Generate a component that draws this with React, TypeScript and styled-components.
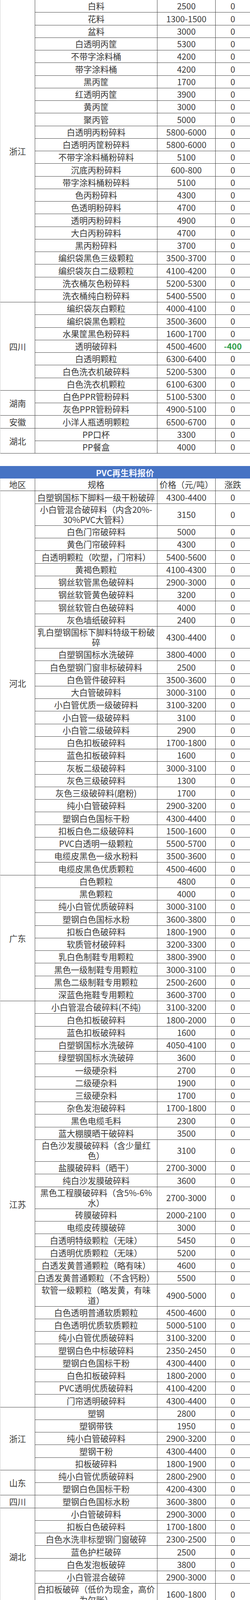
import { createGlobalStyle, styled } from 'styled-components';

const GlobalStyle = createGlobalStyle`
  body {
    margin: 0;
    background: #fff;
  }
  * {
    box-sizing: border-box;
  }
`;

// one table row is 32.25px high, every extra line of text adds 24px
const ROW = 32.25;
const EXTRA_LINE = 24;

type Item = [string, string, string?];
type Group = { region: string; items: Item[] };

const ppGroups: Group[] = [
  {
    region: '浙江',
    items: [
      ['白料', '2500'],
      ['花料', '1300-1500'],
      ['盆料', '3000'],
      ['白透明丙筐', '5300'],
      ['不带字涂料桶', '4200'],
      ['带字涂料桶', '4200'],
      ['黑丙筐', '1700'],
      ['红透明丙筐', '3900'],
      ['黄丙筐', '3000'],
      ['聚丙管', '5000'],
      ['白透明丙粉碎料', '5800-6000'],
      ['白透明丙筐粉碎料', '5800-6000'],
      ['不带字涂料桶粉碎料', '5100'],
      ['沉底丙粉碎料', '600-800'],
      ['带字涂料桶粉碎料', '5100'],
      ['色丙粉碎料', '4300'],
      ['色透明粉碎料', '4700'],
      ['透明丙粉碎料', '4900'],
      ['大白丙粉碎料', '4700'],
      ['黑丙粉碎料', '3700'],
      ['编织袋黑色三级颗粒', '3500-3700'],
      ['编织袋灰白二级颗粒', '4100-4200'],
      ['洗衣桶灰色粉碎料', '5200-5300'],
      ['洗衣桶纯白粉碎料', '5400-5500'],
    ],
  },
  {
    region: '四川',
    items: [
      ['编织袋灰白颗粒', '4000-4100'],
      ['编织袋黑色颗粒', '3500-3600'],
      ['水果筐黑色粉碎料', '1600-1700'],
      ['透明破碎料', '4500-4600', '-400'],
      ['白透明颗粒', '6300-6400'],
      ['白色洗衣机破碎料', '5200-5300'],
      ['白色洗衣机颗粒', '6100-6300'],
    ],
  },
  {
    region: '湖南',
    items: [
      ['白色PPR管粉碎料', '5100-5300'],
      ['灰色PPR管粉碎料', '4900-5100'],
    ],
  },
  { region: '安徽', items: [['小洋人瓶透明颗粒', '6500-6700']] },
  {
    region: '湖北',
    items: [
      ['PP口杯', '3300'],
      ['PP餐盒', '4000'],
    ],
  },
];

const pvcGroups: Group[] = [
  {
    region: '河北',
    items: [
      ['白塑钢国标下脚料一级干粉破碎', '4300-4400'],
      ['小白管混合破碎料（内含20%-\n30%PVC大管料）', '3150'],
      ['白色门帘破碎料', '5000'],
      ['黄色门帘破碎料', '4300'],
      ['白透明颗粒（吹塑，门帘料）', '5400-5600'],
      ['黄褐色颗粒', '4100-4300'],
      ['钢丝软管黑色破碎料', '2900-3000'],
      ['钢丝软管黄色破碎料', '3200'],
      ['钢丝软管白色破碎料', '4000'],
      ['灰色墙纸破碎料', '2400'],
      ['乳白塑钢国标下脚料特级干粉破\n碎', '4300-4400'],
      ['白塑钢国标水洗破碎', '3800-4000'],
      ['白色塑钢门窗非标破碎料', '2500'],
      ['白色管件破碎料', '3500-3600'],
      ['大白管破碎料', '3000-3100'],
      ['小白管优质一级破碎料', '3100-3200'],
      ['小白管一级破碎料', '3100'],
      ['小白管二级破碎料', '2900'],
      ['白色扣板破碎料', '1700-1800'],
      ['蓝色扣板破碎料', '1600'],
      ['灰板二级破碎料', '3000-3100'],
      ['灰色三级破碎料', '1300'],
      ['灰色三级破碎料(磨粉)', '1700'],
      ['纯小白管破碎料', '2900-3200'],
      ['塑钢白色国标干粉', '4300-4400'],
      ['扣板白色二级破碎料', '1500-1600'],
      ['PVC白透明一级颗粒', '5500-5700'],
      ['电缆皮黑色一级水粉料', '3500-3600'],
      ['电缆皮黑色优质颗粒', '4500-4600'],
    ],
  },
  {
    region: '广东',
    items: [
      ['白色颗粒', '4800'],
      ['黑色颗粒', '4000'],
      ['纯小白管优质破碎料', '3000-3100'],
      ['塑钢白色国标水粉', '3600-3800'],
      ['扣板白色破碎料', '1800-1900'],
      ['软质管材破碎料', '3200-3300'],
      ['乳白色制鞋专用颗粒', '3800-3900'],
      ['黑色一级制鞋专用颗粒', '3000-3100'],
      ['黑色二级制鞋专用颗粒', '2500-2600'],
      ['深蓝色拖鞋专用颗粒', '3600-3700'],
    ],
  },
  {
    region: '江苏',
    items: [
      ['小白管混合破碎料(不纯)', '3100-3200'],
      ['白色扣板破碎料', '1800-2000'],
      ['蓝色扣板破碎料', '1600'],
      ['白塑钢国标水洗破碎', '4050-4100'],
      ['绿塑钢国标水洗破碎', '3600'],
      ['一级硬杂料', '2700'],
      ['二级硬杂料', '1900'],
      ['三级硬杂料', '1700'],
      ['杂色发泡破碎料', '1700-1800'],
      ['黑色电缆毛料', '2300'],
      ['蓝大棚膜晒干破碎料', '3500'],
      ['白色沙发膜破碎料（含少量红\n色）', '3100'],
      ['盐膜破碎料（晒干）', '2700-3000'],
      ['纯白沙发膜破碎料', '3600'],
      ['黑色工程膜破碎料（含5%-6%\n水）', '2700-3000'],
      ['砖膜破碎料', '2000-2100'],
      ['电缆皮砖膜破碎', '3000'],
      ['白透明特级颗粒（无味）', '5450'],
      ['白透明优质颗粒（无味）', '5200'],
      ['白透发黄普通颗粒（略有味）', '4600'],
      ['白透发黄普通颗粒（不含钙粉）', '5500'],
      ['软管一级颗粒（略发黄，有味\n道）', '4900-5000'],
      ['白色透明普通软质颗粒', '4500-4600'],
      ['白色透明优质软质颗粒', '5000-5100'],
      ['纯小白管优质破碎料', '3100-3200'],
      ['塑钢白色中标破碎料', '2350-2450'],
      ['塑钢白色国标干粉', '4300-4400'],
      ['白色扣板破碎料', '1800-2000'],
      ['PVC透明优质破碎料', '4100-4200'],
      ['门帘透明破碎料', '4300-4400'],
    ],
  },
  {
    region: '浙江',
    items: [
      ['塑钢', '2800'],
      ['塑钢带铁', '1950'],
      ['纯小白管破碎料', '2900-3200'],
      ['塑钢干粉', '4300-4400'],
      ['扣板破碎料', '1800-1900'],
    ],
  },
  {
    region: '山东',
    items: [
      ['纯小白管优质破碎料', '2800-2900'],
      ['塑钢白色国标干粉', '4200-4300'],
    ],
  },
  { region: '四川', items: [['塑钢白色国标水粉', '3600-3800']] },
  {
    region: '湖北',
    items: [
      ['小白管破碎料', '2900-3000'],
      ['扣板白色破碎料', '1700-1800'],
      ['白色水洗非标塑钢门窗破碎', '2300-2500'],
      ['蓝色护栏破碎', '2500'],
      ['白色发泡板破碎', '3800'],
      ['小白管混合破碎', '2900-3000'],
      ['白扣板破碎（低价为现金，高价\n为欠账）', '1600-1800'],
    ],
  },
  {
    region: '福建',
    items: [
      ['小白管粉碎料', '2900-3000'],
      ['塑钢白色国标水洗粉碎料', '3600-3800'],
      ['塑钢白色非标水洗粉碎料', '2300-2400'],
      ['扣板白色破碎料', '1800-1900'],
    ],
  },
  {
    region: '安徽',
    items: [
      ['小白管白色普通粉碎料', '2900-3000'],
      ['扣板蓝色粉碎料', '1600-1700'],
    ],
  },
  {
    region: '河南',
    items: [
      ['鞋底黑色颗粒', '3000-3100'],
      ['红/黄/蓝电线专用颗粒（新料，\n钙粉40%）', '4100-4200'],
      ['红/黄/蓝电线专用颗粒（新料\n50%，钙粉50%）', '3800-4000'],
      ['红/黄/蓝电线专用颗粒（二次再\n生料，钙粉30%）', '4200-4300'],
      ['白色微黄无味颗粒（3层80目，\n门帘料）', '4800-5000'],
      ['红/蓝色鞋底透明颗粒（无钙\n粉）', '5300-5500'],
      ['红/蓝色鞋底普通颗粒（钙粉\n10%左右）', '4800-4900'],
    ],
  },
];

const peGroups: Group[] = [
  { region: '福建', items: [['白色透明造粒一级', '5300']] },
  {
    region: '广东',
    items: [
      ['LDPE白色颗粒', '5750'],
      ['LDPE黑色颗粒', '5050'],
      ['HDPE黑色粒料', '4800'],
      ['HDPE白色粒料', '5500'],
      ['低压白色一级颗粒', '5700-5800'],
      ['低压黑色一级颗粒', '4700-4900'],
      ['低压蓝色一级颗粒', '5200-5300'],
      ['高压白透明一级颗粒', '5300-5400'],
      ['高压白色一级颗粒', '5000-5200'],
      ['高压黑色一级颗粒', '4200-4300'],
      ['高压黑色二级颗粒', '3700-3800'],
      ['高压蓝色二级颗粒', '3800-3900'],
      ['白色透明造粒一级', '5300-5400'],
    ],
  },
];

const Page = styled.div`
  width: 640px;
  font-family: 'Noto Sans CJK SC', 'Noto Sans', sans-serif;
  font-size: 21.5px;
  color: #3a3a3a;
`;

const Table = styled.div`
  border-left: 1px solid #cfcfcf;
`;

const Spacer = styled.div<{ $h: number }>`
  height: ${(p) => p.$h}px;
`;

const TitleBar = styled.div`
  height: 32px;
  display: flex;
  align-items: center;
  justify-content: center;
  background: #4673c4;
  color: #f3f6ff;
  font-weight: 700;
`;

const HeadRow = styled.div`
  height: ${ROW}px;
  display: grid;
  grid-template-columns: 89px 313px 149px 1fr;
  border-bottom: 1px solid #444;
`;

const GroupRow = styled.div`
  display: flex;
`;

const Region = styled.div`
  flex: none;
  width: 89px;
  display: flex;
  align-items: center;
  justify-content: center;
  border-right: 1px solid #444;
  border-bottom: 1px solid #444;
`;

const Items = styled.div`
  flex: 1;
  display: flex;
  flex-direction: column;
`;

const ItemRow = styled.div<{ $lines: number }>`
  height: ${(p) => ROW + (p.$lines - 1) * EXTRA_LINE}px;
  display: grid;
  grid-template-columns: 313px 149px 1fr;
  border-bottom: 1px solid #444;
`;

const Cell = styled.div<{ $end?: boolean }>`
  display: flex;
  align-items: center;
  justify-content: center;
  padding: 0 3px;
  text-align: center;
  line-height: 26.5px;
  white-space: pre-line;
  border-right: ${(p) => (p.$end ? 'none' : '1px solid #444')};
`;

const Change = styled(Cell)<{ $down?: boolean }>`
  color: ${(p) => (p.$down ? '#2f9e4a' : 'inherit')};
  font-weight: ${(p) => (p.$down ? 700 : 400)};
`;

function Header() {
  return (
    <HeadRow>
      <Cell>地区</Cell>
      <Cell>规格</Cell>
      <Cell>价格（元/吨）</Cell>
      <Cell $end>涨跌</Cell>
    </HeadRow>
  );
}

function PriceGroups({ groups }: { groups: Group[] }) {
  return (
    <>
      {groups.map((g, gi) => (
        <GroupRow key={gi}>
          <Region>{g.region}</Region>
          <Items>
            {g.items.map(([spec, price, change = '0'], i) => (
              <ItemRow key={i} $lines={spec.split('\n').length}>
                <Cell>{spec}</Cell>
                <Cell>{price}</Cell>
                <Change $end $down={change.startsWith('-')}>
                  {change}
                </Change>
              </ItemRow>
            ))}
          </Items>
        </GroupRow>
      ))}
    </>
  );
}

export default function App() {
  return (
    <Page>
      <GlobalStyle />
      <Table>
        <PriceGroups groups={ppGroups} />
      </Table>
      <Spacer $h={32} />
      <TitleBar>PVC再生料报价</TitleBar>
      <Table>
        <Header />
        <PriceGroups groups={pvcGroups} />
      </Table>
      <Spacer $h={33} />
      <TitleBar>PE再生料报价</TitleBar>
      <Table>
        <Header />
        <PriceGroups groups={peGroups} />
      </Table>
    </Page>
  );
}
